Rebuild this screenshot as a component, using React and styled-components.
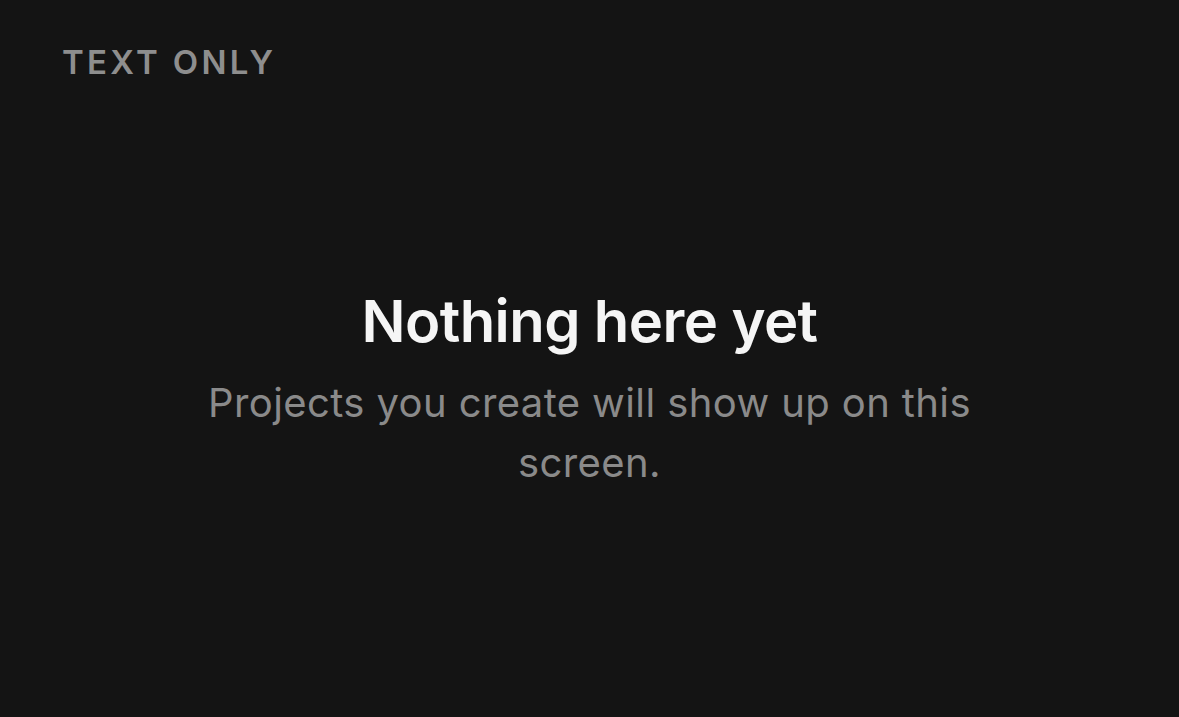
import React from 'react';
import styled, { createGlobalStyle } from 'styled-components';

const GlobalStyle = createGlobalStyle`
  html, body {
    margin: 0;
    padding: 0;
    background: #141414;
  }
  #root {
    min-height: 100vh;
  }
`;

const Screen = styled.div`
  height: 717px;
  display: flex;
  flex-direction: column;
  background: #141414;
  font-family: Inter, "Noto Sans", sans-serif;
  -webkit-font-smoothing: antialiased;
`;

const Header = styled.header`
  padding: 42px 62px 0;
  line-height: 40px;
`;

const Label = styled.span`
  font-size: 33px;
  font-weight: 600;
  letter-spacing: 0.1em;
  color: #8e8e8e;
  text-transform: uppercase;
`;

const Body = styled.main`
  flex: 1;
  display: flex;
  align-items: center;
  justify-content: center;
  padding-bottom: 26px;
`;

const Empty = styled.section`
  max-width: 840px;
  display: flex;
  flex-direction: column;
  align-items: center;
  text-align: center;
`;

const Title = styled.h1`
  margin: 0;
  font-size: 58px;
  font-weight: 600;
  letter-spacing: -0.01em;
  color: #f5f5f5;
  line-height: 70px;
`;

const Subtitle = styled.p`
  margin: 17px 0 0;
  font-size: 40px;
  font-weight: 400;
  letter-spacing: 0.4px;
  line-height: 60px;
  color: #8a8a8a;
`;

export default function App() {
  return (
    <>
      <GlobalStyle />
      <Screen>
        <Header>
          <Label>Text only</Label>
        </Header>
        <Body>
          <Empty>
            <Title>Nothing here yet</Title>
            <Subtitle>Projects you create will show up on this screen.</Subtitle>
          </Empty>
        </Body>
      </Screen>
    </>
  );
}
